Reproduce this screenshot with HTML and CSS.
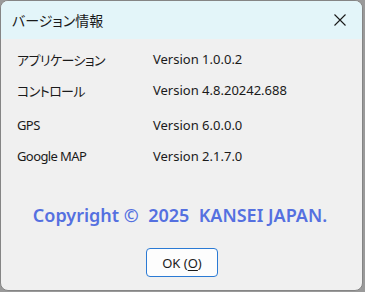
FILE: index.html
```html
<!DOCTYPE html>
<html lang="ja">
<head>
    <meta charset="UTF-8">
    <title>バージョン情報</title>
    <link rel="stylesheet" href="styles.css">
</head>
<body>
<div class="window">
    <div class="titlebar">
        <span class="title">バージョン情報</span>
        <span class="close">
            <svg width="12" height="12" viewBox="0 0 12 12"><path d="M0.5 0.5L11.5 11.5M11.5 0.5L0.5 11.5" stroke="#1a1a1a" stroke-width="1.1" fill="none"/></svg>
        </span>
    </div>
    <div class="content">
        <div class="info">
            <div class="row"><span class="label">アプリケーション</span><span class="ver">Version 1.0.0.2</span></div>
            <div class="row"><span class="label">コントロール</span><span class="ver">Version 4.8.20242.688</span></div>
            <div class="row gps"><span class="label">GPS</span><span class="ver">Version 6.0.0.0</span></div>
            <div class="row"><span class="label">Google MAP</span><span class="ver">Version 2.1.7.0</span></div>
        </div>
        <div class="copyright">Copyright ©&nbsp; 2025&nbsp; KANSEI JAPAN.</div>
        <div class="buttons">
            <button class="ok">OK (<u>O</u>)</button>
        </div>
    </div>
</div>
</body>
</html>
```
FILE: styles.css
```css
*{
    margin:0;
    padding:0;
    box-sizing: border-box;
}

body{
    background: #9a9a9a;
    font-family: "Noto Sans", "Noto Sans CJK JP", sans-serif;
    color: #1a1a1a;
}

.window{
    width:363px;
    height:291px;
    border:1px solid #858585;
    border-radius: 8px;
    overflow: hidden;
    background: #f0f0f0;
    display: flex;
    flex-direction: column;
}

.titlebar{
    height:38px;
    background: #e3f5f9;
    display: flex;
    align-items: center;
    justify-content: space-between;
    padding: 0 16px 0 11px;
}
.title{
    font-family: "Noto Sans CJK JP", sans-serif;
    font-size: 14px;
    font-feature-settings: "palt";
}
.close{
    display: flex;
}

.content{
    flex:1;
    padding-top: 10px;
}

.info{
    padding-left: 16px;
    display: flex;
    flex-direction: column;
    gap: 11px;
}
.row{
    display: flex;
    height:20px;
    align-items: center;
    font-size: 13px;
}
.row.gps{
    margin-top: 4px;
}
.label{
    width:136px;
    font-family: "Noto Sans", "Noto Sans CJK JP", sans-serif;
    font-feature-settings: "palt";
    letter-spacing: -0.6px;
}
.label, .ver{
    white-space: nowrap;
}

.copyright{
    margin-top: 37px;
    text-align: center;
    font-size: 18px;
    font-weight: 600;
    color: #5570e0;
    line-height: 24px;
    padding-right: 3px;
}

.buttons{
    display: flex;
    justify-content: center;
    margin-top: 21px;
}
.ok{
    width:72px;
    height:29px;
    background: #fdfdfd;
    border: 1.5px solid #2b7ad4;
    border-radius: 4px;
    font-family: "Noto Sans", sans-serif;
    font-size: 13px;
    color: #1a1a1a;
    margin-left: 1px;
}
.ok u{
    text-underline-offset: 2px;
}
```
